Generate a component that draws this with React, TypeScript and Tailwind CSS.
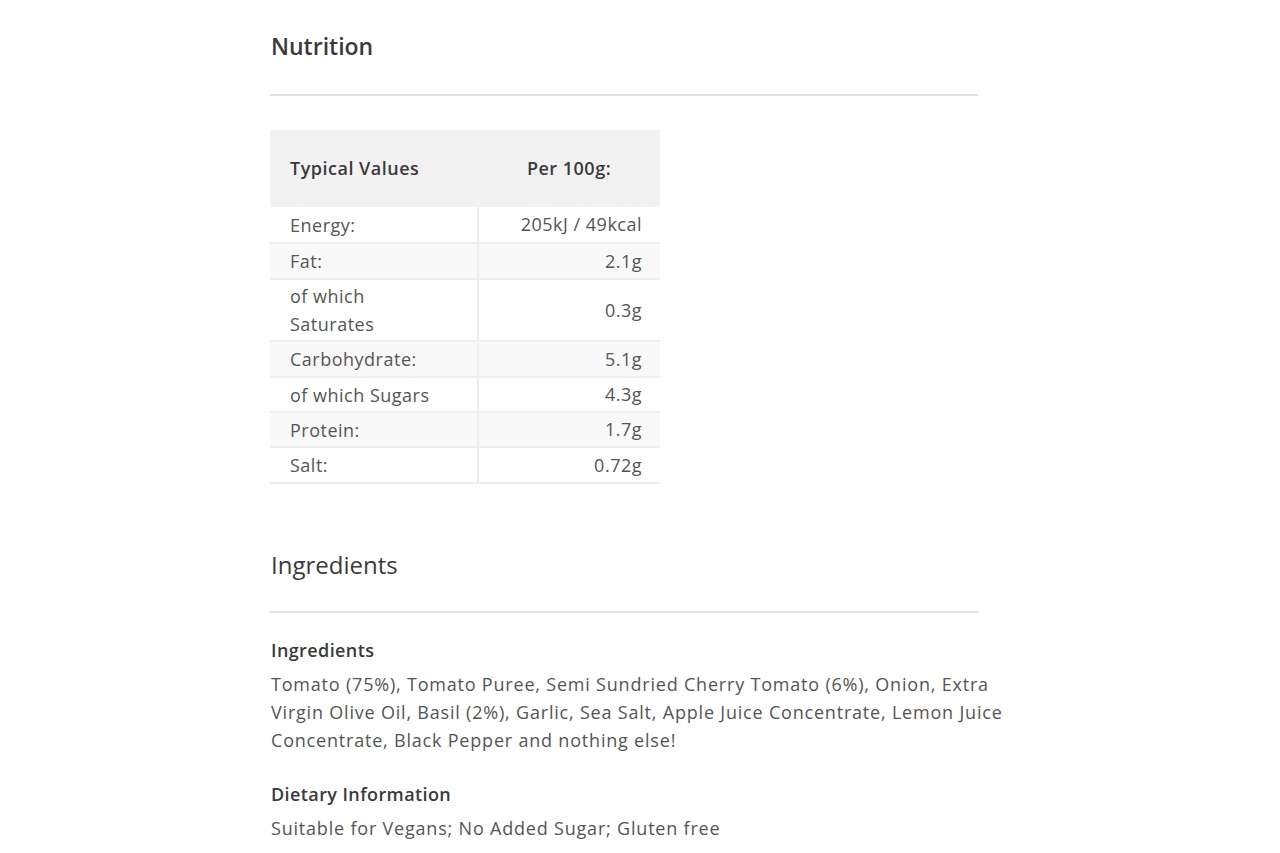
const rows: { label: string; value: string; h: string }[] = [
  { label: 'Energy:', value: '205kJ / 49kcal', h: 'h-[36px]' },
  { label: 'Fat:', value: '2.1g', h: 'h-[36px]' },
  { label: 'of which Saturates', value: '0.3g', h: 'h-[62px]' },
  { label: 'Carbohydrate:', value: '5.1g', h: 'h-[36px]' },
  { label: 'of which Sugars', value: '4.3g', h: 'h-[35px]' },
  { label: 'Protein:', value: '1.7g', h: 'h-[35px]' },
  { label: 'Salt:', value: '0.72g', h: 'h-[36px]' },
];

const App = () => {
  return (
    <div className="min-h-screen w-full bg-white font-['Open_Sans',sans-serif] text-[#555]">
      <div className="ml-[271px] w-[780px] pt-[30px]">
        <h2 className="text-[23px] leading-[32px] font-semibold text-[#3a3a3a]">Nutrition</h2>
        <hr className="mt-[32px] w-[708px] -ml-px border-0 border-t-2 border-[#e1e1e1]" />

        <table className="mt-[34px] -ml-px w-[390px] border-collapse text-[18px] tracking-[0.5px]">
          <thead>
            <tr className="bg-[#f2f2f2] h-[77px]">
              <th className="w-[208px] pl-[20px] text-left font-semibold text-[#3a3a3a]">Typical Values</th>
              <th className="text-center font-semibold text-[#3a3a3a]">Per 100g:</th>
            </tr>
          </thead>
          <tbody>
            {rows.map((r, i) => (
              <tr
                key={r.label}
                className={`${i % 2 === 1 ? 'bg-[#f9f9f9]' : 'bg-white'} ${r.h} border-b-2 border-[#eeeeee]`}
              >
                <td className="pl-[20px] pr-2 leading-[28px] border-r-2 border-[#eeeeee]">
                  {r.label === 'of which Saturates' ? (
                    <>
                      of which
                      <br />
                      Saturates
                    </>
                  ) : (
                    r.label
                  )}
                </td>
                <td className="pr-[18px] text-right">{r.value}</td>
              </tr>
            ))}
          </tbody>
        </table>

        <h2 className="mt-[65px] text-[24px] leading-[32px] text-[#3a3a3a]">Ingredients</h2>
        <hr className="mt-[30px] w-[708px] -ml-px border-0 border-t-2 border-[#e1e1e1]" />

        <h3 className="mt-[23px] text-[18px] leading-[28px] font-semibold tracking-[0.4px] text-[#3a3a3a]">Ingredients</h3>
        <p className="mt-[6px] text-[18px] leading-[28px] tracking-[0.8px]">
          Tomato (75%), Tomato Puree, Semi Sundried Cherry Tomato (6%), Onion, Extra
          <br />
          Virgin Olive Oil, Basil (2%), Garlic, Sea Salt, Apple Juice Concentrate, Lemon Juice
          <br />
          Concentrate, Black Pepper and nothing else!
        </p>

        <h3 className="mt-[26px] text-[18px] leading-[28px] font-semibold tracking-[0.4px] text-[#3a3a3a]">Dietary Information</h3>
        <p className="mt-[6px] text-[18px] leading-[28px] tracking-[0.8px]">Suitable for Vegans; No Added Sugar; Gluten free</p>
      </div>
    </div>
  );
};

export default App;
